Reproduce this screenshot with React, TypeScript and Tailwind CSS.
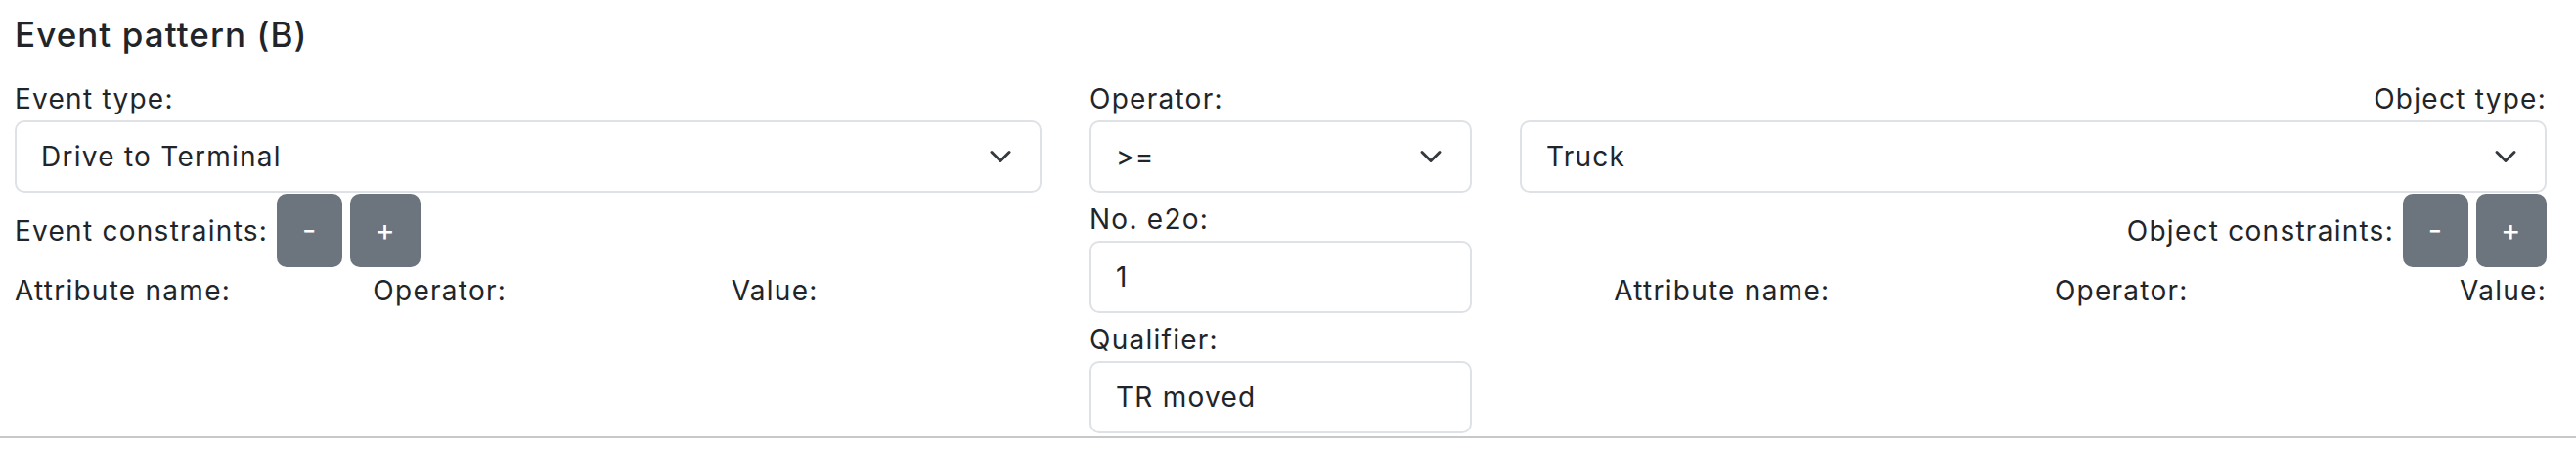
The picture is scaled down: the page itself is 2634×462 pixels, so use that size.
import React from "react";

const Chevron = () => (
  <svg
    className="w-[24px] h-[24px] shrink-0"
    viewBox="0 0 16 16"
    fill="none"
    stroke="#343a40"
    strokeWidth="2"
    strokeLinecap="round"
    strokeLinejoin="round"
  >
    <path d="m2 5 6 6 6-6" />
  </svg>
);

const Select = ({ value }: { value: string }) => (
  <div className="flex h-[74px] items-center justify-between rounded-[10px] border-2 border-[#dee2e6] bg-white pl-[25px] pr-[28px]">
    <span>{value}</span>
    <Chevron />
  </div>
);

const Input = ({ value }: { value: string }) => (
  <div className="flex h-[74px] items-center rounded-[10px] border-2 border-[#dee2e6] bg-white pl-[25px]">
    {value}
  </div>
);

const Label = ({ text, right, className = "" }: { text: string; right?: boolean; className?: string }) => (
  <div className={`leading-[42px] h-[43px] ${right ? "text-right" : ""} ${className}`}>{text}</div>
);

const Constraints = ({ label, right }: { label: string; right?: boolean }) => (
  <div className={`flex h-[76px] items-center pt-px ${right ? "justify-end" : ""}`}>
    <span>{label}</span>
    <button className="ml-[9px] h-[75px] w-[67px] rounded-[10px] bg-[#6c757d] text-[31px] text-white">-</button>
    <button className="ml-[8px] h-[75px] w-[72px] rounded-[10px] bg-[#6c757d] text-[31px] text-white">+</button>
  </div>
);

const AttributeHeader = ({ right }: { right?: boolean }) => (
  <div className={`grid grid-cols-3 gap-x-[49px] pt-[3px] leading-[42px] ${right ? "text-right" : ""}`}>
    <div>Attribute name:</div>
    <div>Operator:</div>
    <div>Value:</div>
  </div>
);

export default function App() {
  return (
    <div className="w-[2634px] h-[462px] overflow-hidden bg-white text-[#212529] text-[28px] font-['Inter',sans-serif] tracking-[0.045em]">
      <div className="h-[446px] px-[15px] pt-[14px]">
        <h5 className="text-[35px] leading-[42px] font-medium tracking-[0.03em] mb-[24px]">Event pattern (B)</h5>
        <div className="flex gap-[49px]">
          <div className="w-[1050px]">
            <Label text="Event type:" />
            <Select value="Drive to Terminal" />
            <Constraints label="Event constraints:" />
            <AttributeHeader />
          </div>
          <div className="w-[391px]">
            <Label text="Operator:" />
            <Select value=">=" />
            <Label text="No. e2o:" className="mt-[6px]" />
            <Input value="1" />
            <Label text="Qualifier:" className="mt-[6px]" />
            <Input value="TR moved" />
          </div>
          <div className="w-[1050px]">
            <Label text="Object type:" right />
            <Select value="Truck" />
            <Constraints label="Object constraints:" right />
            <AttributeHeader right />
          </div>
        </div>
      </div>
      <div className="h-[2px] bg-[#c8c8c8]" />
    </div>
  );
}
